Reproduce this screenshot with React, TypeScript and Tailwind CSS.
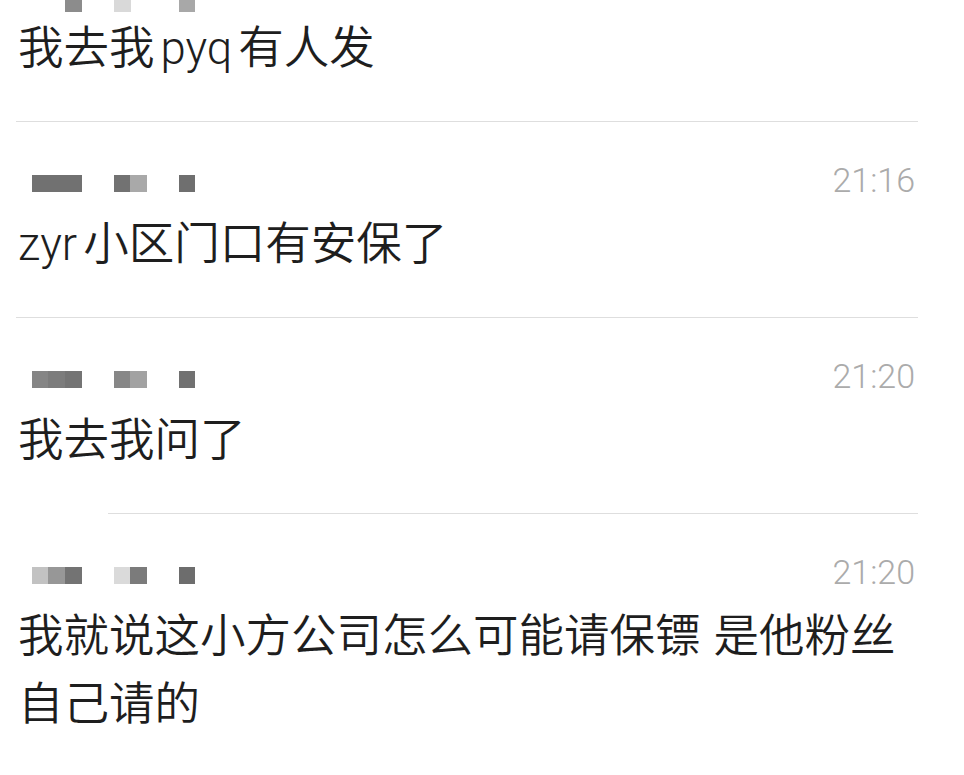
import React from "react";

type Seg = { w: number; c: string };

const Blocks = ({ groups }: { groups: Seg[][] }) => (
  <div className="flex items-center gap-[32px] blur-[0.4px]">
    {groups.map((g, i) => (
      <div key={i} className="flex h-[17px]">
        {g.map((s, j) => (
          <div key={j} style={{ width: s.w, backgroundColor: s.c }} className="h-full" />
        ))}
      </div>
    ))}
  </div>
);

const font = {
  fontFamily: 'Roboto, "Noto Sans CJK SC", sans-serif',
};

const Msg = ({
  groups,
  time,
  children,
}: {
  groups: Seg[][];
  time: string;
  children: React.ReactNode;
}) => (
  <div className="pt-[41px]">
    <div className="flex h-[40px] items-center justify-between pl-[32px] pr-[49px]">
      <Blocks groups={groups} />
      <span
        className="text-[34px] font-light leading-none text-[#ababab] relative top-[-3px]"
        style={{ fontFamily: 'Roboto, "Liberation Sans", sans-serif' }}
      >
        {time}
      </span>
    </div>
    <div
      className="mt-[8px] pl-[18px] text-[45.5px] font-[350] leading-[68px] text-[#1e1e1e]"
      style={font}
    >
      {children}
    </div>
  </div>
);

export default function App() {
  return (
    <div className="w-[964px] h-[775px] overflow-hidden bg-white">
      {/* partial top row */}
      <div className="h-[12px] overflow-hidden pl-[32px]">
        <div className="mt-[-5px]">
          <Blocks
            groups={[
              [
                { w: 33, c: "#ffffff" },
                { w: 17, c: "#8c8c8c" },
              ],
              [
                { w: 17, c: "#d9d9d9" },
                { w: 16, c: "#ffffff" },
              ],
              [{ w: 16, c: "#a8a8a8" }],
            ]}
          />
        </div>
      </div>
      <div
        className="mt-[3px] pl-[18px] text-[45.5px] font-[350] leading-[68px] text-[#1e1e1e]"
        style={font}
      >
        我去我<span className="mx-[6px]">pyq</span>有人发
      </div>
      <div className="mt-[38px] ml-[16px] mr-[46px] h-px bg-[#dedede]" />

      <Msg
        groups={[
          [{ w: 50, c: "#717171" }],
          [
            { w: 16, c: "#727272" },
            { w: 17, c: "#a9a9a9" },
          ],
          [{ w: 16, c: "#6f6f6f" }],
        ]}
        time="21:16"
      >
        <div>
          <span className="mr-[6px]">zyr</span>小区门口有安保了
        </div>
      </Msg>
      <div className="mt-[38px] ml-[16px] mr-[46px] h-px bg-[#dedede]" />

      <Msg
        groups={[
          [
            { w: 16, c: "#858585" },
            { w: 17, c: "#7c7c7c" },
            { w: 17, c: "#747474" },
          ],
          [
            { w: 16, c: "#878787" },
            { w: 17, c: "#a2a2a2" },
          ],
          [{ w: 16, c: "#717171" }],
        ]}
        time="21:20"
      >
        <div>我去我问了</div>
      </Msg>
      <div className="mt-[38px] ml-[108px] mr-[46px] h-px bg-[#dedede]" />

      <Msg
        groups={[
          [
            { w: 16, c: "#c2c2c2" },
            { w: 17, c: "#979797" },
            { w: 17, c: "#737373" },
          ],
          [
            { w: 16, c: "#dadada" },
            { w: 17, c: "#7b7b7b" },
          ],
          [{ w: 16, c: "#6d6d6d" }],
        ]}
        time="21:20"
      >
        <div>
          我就说这小方公司怎么可能请保镖<span className="ml-[13px]">是他粉丝</span>
        </div>
        <div>自己请的</div>
      </Msg>
    </div>
  );
}
